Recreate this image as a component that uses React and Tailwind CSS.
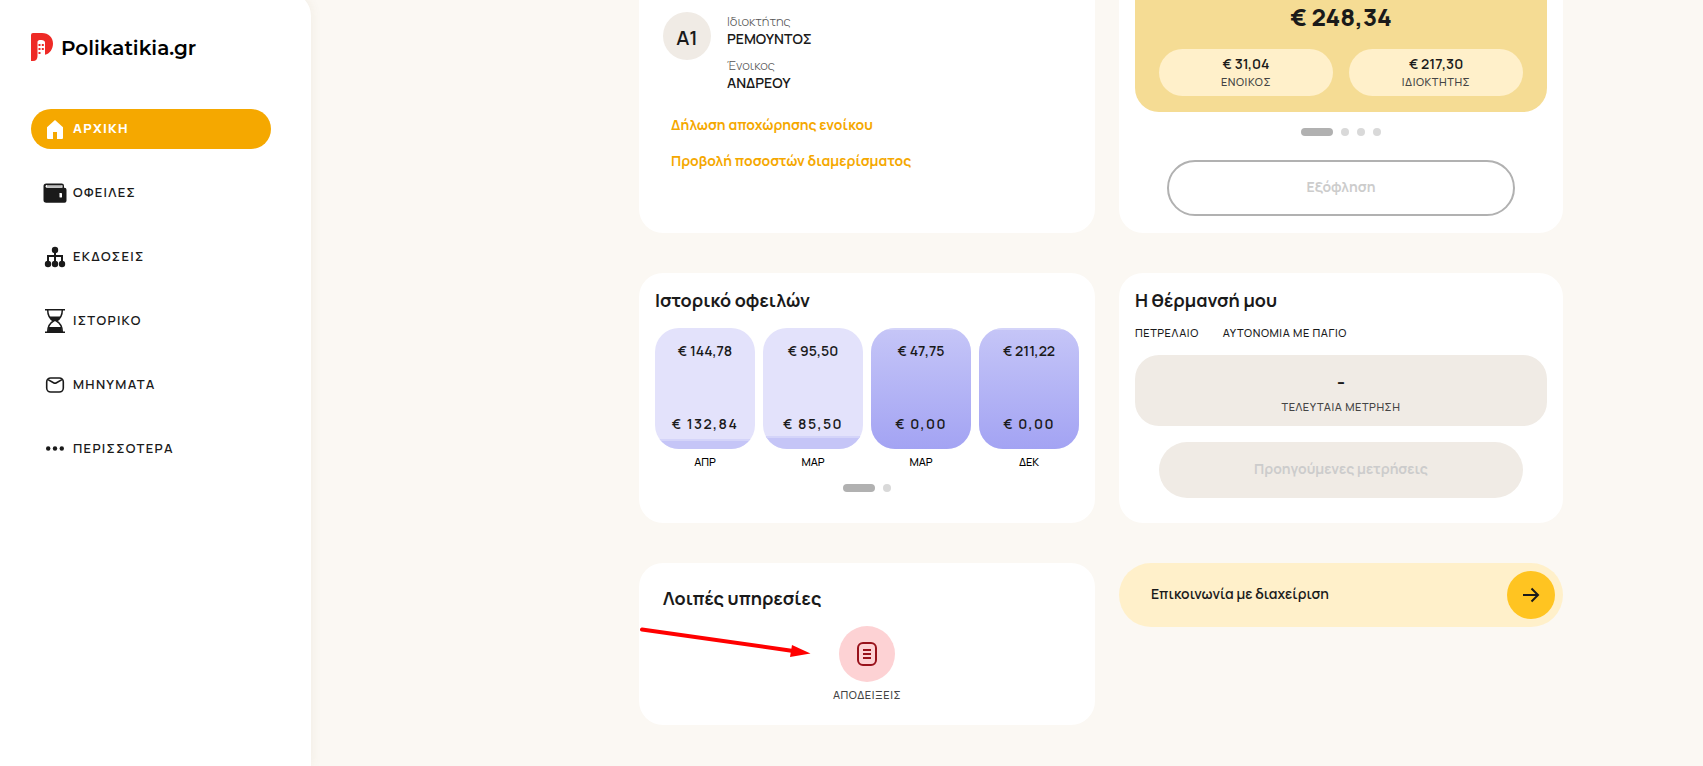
import clsx from "clsx";

const menu = [
  { label: "ΑΡΧΙΚΗ", icon: HomeIcon, active: true },
  { label: "ΟΦΕΙΛΕΣ", icon: WalletIcon },
  { label: "ΕΚΔΟΣΕΙΣ", icon: TreeIcon },
  { label: "ΙΣΤΟΡΙΚΟ", icon: HourglassIcon },
  { label: "ΜΗΝΥΜΑΤΑ", icon: MailIcon },
  { label: "ΠΕΡΙΣΣΟΤΕΡΑ", icon: DotsIcon },
];

const history = [
  { month: "ΑΠΡ", total: "€ 144,78", due: "€ 132,84", paid: 8 },
  { month: "ΜΑΡ", total: "€ 95,50", due: "€ 85,50", paid: 11 },
  { month: "ΜΑΡ", total: "€ 47,75", due: "€ 0,00", paid: 100 },
  { month: "ΔΕΚ", total: "€ 211,22", due: "€ 0,00", paid: 100 },
];

function HomeIcon() {
  return (
    <svg width="24" height="24" viewBox="0 0 24 24" fill="currentColor">
      <path d="M12 3 4 10.2V21a1 1 0 0 0 1 1h5v-7h4v7h5a1 1 0 0 0 1-1V10.2z" />
    </svg>
  );
}

function WalletIcon() {
  return (
    <svg width="24" height="24" viewBox="0 0 24 24">
      <path
        d="M3.2 2.5h15.5a2.3 2.3 0 0 1 2.3 2.3v2h.5a2 2 0 0 1 2 2v11a2 2 0 0 1-2 2H3.2a2.7 2.7 0 0 1-2.7-2.7V5.2a2.7 2.7 0 0 1 2.7-2.7z"
        fill="#1a1a1a"
      />
      <path d="M4 4h14.5c.8 0 1 .5 1 1v1.800H4C2 6.800 2 4 4 4z" fill="#fff" />
      <path d="M4 4.900h14.800" stroke="#1a1a1a" strokeWidth=".7" />
      <rect x="16.5" y="12" width="2.5" height="4.5" rx=".4" fill="#fff" />
    </svg>
  );
}

function TreeIcon() {
  return (
    <svg width="24" height="24" viewBox="0 0 24 24" fill="#1a1a1a">
      <circle cx="12" cy="5" r="3.2" />
      <circle cx="5" cy="19" r="3.2" />
      <circle cx="12" cy="19" r="3.2" />
      <circle cx="19" cy="19" r="3.2" />
      <path d="M12 5v14M5 19v-8h14v8" fill="none" stroke="#1a1a1a" strokeWidth="2" />
    </svg>
  );
}

function HourglassIcon() {
  return (
    <svg width="24" height="24" viewBox="0 0 24 24" fill="none" stroke="#1a1a1a">
      <path d="M2 .8h20M2 23.2h20" strokeWidth="1.6" />
      <path
        d="M4.7 1c0 6 2.3 9 5.8 11C7 14 4.7 17 4.7 23M19.3 1c0 6-2.3 9-5.8 11 3.5 2 5.8 5 5.8 11"
        strokeWidth="1.5"
      />
      <path d="M6 7.5h12c-1.2 2.4-2.8 3.8-4.5 4.5h-3C8.8 11.3 7.2 9.900 6 7.500zM5 23c0-2 .3-3.6.8-5h12.4c.5 1.4.8 3 .8 5z" fill="#1a1a1a" stroke="none" />
    </svg>
  );
}

function MailIcon() {
  return (
    <svg width="24" height="24" viewBox="0 0 24 24" fill="none" stroke="#1a1a1a" strokeWidth="1.6">
      <rect x="3.7" y="5" width="16.6" height="14" rx="4" />
      <path d="m5 6.6 5.5 3.2c1 .6 2 .6 3 0L19 6.6" />
    </svg>
  );
}

function DotsIcon() {
  return (
    <svg width="24" height="24" viewBox="0 0 24 24" fill="#1a1a1a">
      <circle cx="5.2" cy="11.5" r="2.2" />
      <circle cx="12" cy="11.5" r="2.2" />
      <circle cx="18.8" cy="11.5" r="2.2" />
    </svg>
  );
}

function Logo() {
  return (
    <a href="#" className="flex items-center gap-2">
      <svg width="22" height="28" viewBox="0 0 22 28">
        <path
          d="M2 0h9c6.5 0 11 4.3 11 10.5 0 5.8-3.4 10.3-8 11.3V9.5C14 8 12.5 7 10.5 7h-2C7.5 7 6.5 8 6.5 9v14c0 3-1.5 5-4.5 5H0V2a2 2 0 0 1 2-2z"
          fill="#ee2a26"
        />
        <path
          d="M7.5 11h2v2h-2zM10.8 11h2v2h-2zM7.5 15h2v2h-2zM10.8 15h2v2h-2zM7.5 19h2v2h-2z"
          fill="#ee2a26"
        />
      </svg>
      <span className="pt-0.5 font-['Montserrat','Manrope','Inter',sans-serif] text-xl font-semibold text-black">
        Polikatikia.gr
      </span>
    </a>
  );
}

function Sidebar() {
  return (
    <aside className="-mt-2 w-[311px] shrink-0 rounded-tr-3xl bg-white pl-[31px] pr-10 pt-10 shadow-[0_0_12px_rgba(120,90,40,0.08)]">
      <Logo />
      <nav className="mt-[47px] flex flex-col gap-6">
        {menu.map(({ label, icon: Icon, active }) => (
          <a
            key={label}
            href="#"
            className={clsx(
              "flex h-10 items-center gap-1.5 rounded-full pl-3 text-[13px] tracking-widest",
              active ? "bg-[#f5a800] font-extrabold text-white" : "font-semibold"
            )}
          >
            <Icon />
            {label}
          </a>
        ))}
      </nav>
    </aside>
  );
}

function Pager({ count }) {
  return (
    <div className="flex justify-center gap-2">
      <span className="h-2 w-8 rounded-full bg-[#b1b1b1]" />
      {Array.from({ length: count - 1 }, (_, i) => (
        <span key={i} className="size-2 rounded-full bg-[#d9d9d9]" />
      ))}
    </div>
  );
}

function Apartment() {
  return (
    <section className="rounded-b-3xl bg-white px-6 pt-3">
      <div className="flex gap-4">
        <div className="flex size-12 items-center justify-center rounded-full bg-[#f0ebe5] pt-1 text-xl font-semibold">
          A1
        </div>
        <dl className="text-sm">
          <dt className="text-[13px] leading-[18px] font-light text-[#555]">Ιδιοκτήτης</dt>
          <dd className="mb-2 leading-[18px] font-semibold">ΡΕΜΟΥΝΤΟΣ</dd>
          <dt className="text-[13px] leading-[18px] font-light text-[#555]">Ένοικος</dt>
          <dd className="leading-[18px] font-semibold">ΑΝΔΡΕΟΥ</dd>
        </dl>
      </div>
      <div className="mt-[23px] flex flex-col items-start gap-4 pl-2 text-sm font-bold text-[#f5a800]">
        <a href="#">Δήλωση αποχώρησης ενοίκου</a>
        <a href="#">Προβολή ποσοστών διαμερίσματος</a>
      </div>
    </section>
  );
}

function Share({ amount, who }) {
  return (
    <div className="flex-1 rounded-full bg-[#fff0ca] pt-1.5 pb-[5px] text-center">
      <p className="text-sm leading-[18px] font-semibold">{amount}</p>
      <p className="text-[11px] leading-[18px] font-medium tracking-wider text-[#444]">{who}</p>
    </div>
  );
}

function Balance() {
  return (
    <section className="rounded-b-3xl bg-white px-4 pb-[17px]">
      <div className="rounded-b-3xl bg-[#f5dc94] px-6 pt-px pb-4">
        <p className="text-center text-2xl leading-8 font-extrabold">€ 248,34</p>
        <div className="mt-4 flex gap-4">
          <Share amount="€ 31,04" who="ΕΝΟΙΚΟΣ" />
          <Share amount="€ 217,30" who="ΙΔΙΟΚΤΗΤΗΣ" />
        </div>
      </div>
      <div className="mt-4 mb-6">
        <Pager count={4} />
      </div>
      <div className="px-8">
        <button
          disabled
          className="h-14 w-full rounded-full border-2 border-[#b1b1b1] pb-0.5 text-sm font-bold text-[#ccc]"
        >
          Εξόφληση
        </button>
      </div>
    </section>
  );
}

function DebtHistory() {
  return (
    <section className="rounded-3xl bg-white px-4 pt-[13px] pb-[31px]">
      <h2 className="text-lg leading-7 font-bold">Ιστορικό οφειλών</h2>
      <div className="mt-3.5 grid grid-cols-4 gap-2 text-center">
        {history.map((item) => (
          <div key={item.total}>
            <div className="relative flex h-[121px] flex-col justify-between overflow-hidden rounded-3xl bg-[#e3e2fb] pt-3.5 pb-4 text-sm font-semibold">
              <div
                className={clsx(
                  "absolute inset-x-0 bottom-0 border-t-2 border-[#d4d4f9]",
                  item.paid === 100 ? "bg-linear-to-b from-[#c5c5f7] to-[#a3a3f3]" : "bg-[#c5c5f7]"
                )}
                style={{ height: `${item.paid}%` }}
              />
              <span className="relative leading-[18px]">{item.total}</span>
              <span className="relative leading-[18px] tracking-widest">{item.due}</span>
            </div>
            <p className="mt-1 text-[11px] leading-[18px] font-medium text-black">{item.month}</p>
          </div>
        ))}
      </div>
      <div className="mt-[13px]">
        <Pager count={2} />
      </div>
    </section>
  );
}

function Heating() {
  return (
    <section className="rounded-3xl bg-white px-4 pt-[13px] pb-[25px]">
      <h2 className="text-lg leading-7 font-bold">Η θέρμανσή μου</h2>
      <div className="mt-2.5 flex gap-6 text-[11px] leading-[18px] font-medium tracking-wider">
        <span>ΠΕΤΡΕΛΑΙΟ</span>
        <span>ΑΥΤΟΝΟΜΙΑ ΜΕ ΠΑΓΙΟ</span>
      </div>
      <div className="mt-[13px] rounded-3xl bg-[#f0ebe5] pt-[11px] pb-2.5 text-center">
        <p className="text-xl leading-8 font-bold">-</p>
        <p className="text-[11px] leading-[18px] font-medium tracking-wider text-[#444]">ΤΕΛΕΥΤΑΙΑ ΜΕΤΡΗΣΗ</p>
      </div>
      <div className="mt-4 px-6">
        <button disabled className="h-14 w-full rounded-full bg-[#f0ebe5] pb-0.5 text-sm font-bold text-[#ccc]">
          Προηγούμενες μετρήσεις
        </button>
      </div>
    </section>
  );
}

function Services() {
  return (
    <section className="relative rounded-3xl bg-white px-6 py-[21px]">
      <h2 className="text-lg leading-7 font-bold">Λοιπές υπηρεσίες</h2>
      <button className="mx-auto mt-3.5 flex flex-col items-center">
        <span className="flex size-14 items-center justify-center rounded-full bg-[#fdd2d4]">
          <svg width="24" height="24" viewBox="0 0 24 24" fill="none" stroke="#98121b" strokeWidth="2">
            <rect x="3" y="1" width="18" height="22" rx="5" />
            <path d="M8 8h8M8 12h8M8 16h8" />
          </svg>
        </span>
        <span className="mt-1 text-[11px] leading-[18px] font-medium tracking-wider text-[#444]">ΑΠΟΔΕΙΞΕΙΣ</span>
      </button>
      <svg className="absolute top-16 left-0" width="172" height="32" viewBox="0 0 172 32">
        <path d="M3 2.6 156 24.2" stroke="#f00" strokeWidth="4" strokeLinecap="round" />
        <path d="m153 18 18.5 8.5L151 30z" fill="#f00" />
      </svg>
    </section>
  );
}

function Contact() {
  return (
    <a href="#" className="flex h-16 items-center justify-between self-start rounded-full bg-[#fff0ca] pr-2 pl-8">
      <span className="pb-0.5 text-sm font-semibold">Επικοινωνία με διαχείριση</span>
      <span className="flex size-12 items-center justify-center rounded-full bg-[#ffc421]">
        <svg width="18" height="16" viewBox="0 0 18 16" fill="none" stroke="#1a1a1a" strokeWidth="2">
          <path d="M1 8h15M9.5 1.5 16 8l-6.5 6.5" />
        </svg>
      </span>
    </a>
  );
}

export default function App() {
  return (
    <div className="flex min-h-screen overflow-hidden bg-[#fbf8f3] font-['Manrope','Inter',sans-serif] text-[#1a1a1a]">
      <Sidebar />
      <main className="grid flex-1 grid-cols-[456fr_444fr] content-start gap-x-6 gap-y-10 pr-[140px] pb-10 pl-[328px]">
        <Apartment />
        <Balance />
        <DebtHistory />
        <Heating />
        <Services />
        <Contact />
      </main>
    </div>
  );
}
